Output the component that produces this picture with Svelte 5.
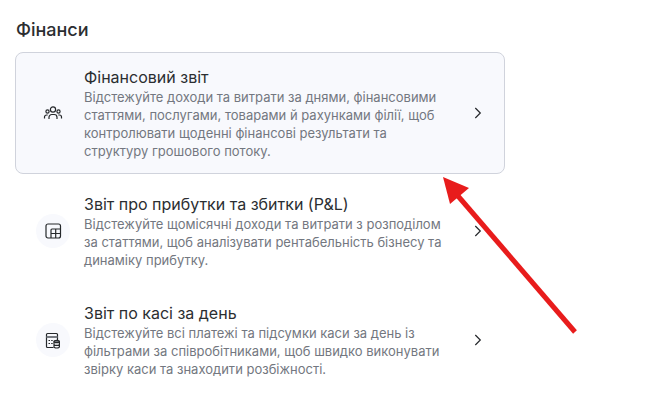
<script lang="ts">
	type Report = {
		icon: 'people' | 'layout' | 'register';
		title: string;
		text: string;
		active?: boolean;
	};

	const reports: Report[] = [
		{
			icon: 'people',
			title: 'Фінансовий звіт',
			text: 'Відстежуйте доходи та витрати за днями, фінансовими статтями, послугами, товарами й рахунками філії, щоб контролювати щоденні фінансові результати та структуру грошового потоку.',
			active: true
		},
		{
			icon: 'layout',
			title: 'Звіт про прибутки та збитки (P&L)',
			text: 'Відстежуйте щомісячні доходи та витрати з розподілом за статтями, щоб аналізувати рентабельність бізнесу та динаміку прибутку.'
		},
		{
			icon: 'register',
			title: 'Звіт по касі за день',
			text: 'Відстежуйте всі платежі та підсумки каси за день із фільтрами за співробітниками, щоб швидко виконувати звірку каси та знаходити розбіжності.'
		}
	];
</script>

<main>
	<h2>Фінанси</h2>

	<div class="list">
		{#each reports as report}
			<a href="#{report.icon}" class="card" class:active={report.active}>
				<span class="icon">
					{#if report.icon === 'people'}
						<svg width="20" height="20" viewBox="0 0 20 20">
							<circle cx="10" cy="6.5" r="2.6" />
							<circle cx="4.5" cy="8.500" r="1.6" />
							<circle cx="15.5" cy="8.500" r="1.6" />
							<path d="M6 16v-1.700a2.800 2.800 0 0 1 2.800-2.800h2.400a2.800 2.800 0 0 1 2.800 2.800V16" />
							<path d="M1.500 15.500V14a2 2 0 0 1 2-2h1.200M18.500 15.500V14a2 2 0 0 0-2-2h-1.200" />
						</svg>
					{:else if report.icon === 'layout'}
						<svg width="20" height="20" viewBox="0 0 20 20">
							<rect x="3" y="3" width="14.5" height="14" rx="2" />
							<path d="M8 17V9a1 1 0 0 1 1-1h8.500M8 12.500h9.500M12.700 8v9" />
						</svg>
					{:else}
						<svg width="20" height="20" viewBox="0 0 20 20">
							<path d="M10.500 17.500H4.500a1 1 0 0 1-1-1v-12a1 1 0 0 1 1-1h9a1 1 0 0 1 1 1V10" />
							<path class="band" d="M3.500 7h11" />
							<path d="M5.500 10.500h1.500M8.200 10.500h1.500M5.500 13.500h1.500M8.200 13.500h1.500" />
							<ellipse class="coin" cx="13.700" cy="11.500" rx="2.700" ry="1.200" />
							<path d="M11 11.500v5.300c0 .7 1.200 1.200 2.700 1.200s2.700-.5 2.700-1.200v-5.300M11 14.200c0 .7 1.200 1.200 2.700 1.200s2.700-.5 2.700-1.200" />
						</svg>
					{/if}
				</span>
				<span class="body">
					<span class="title">{report.title}</span>
					<span class="text">{report.text}</span>
				</span>
				<svg class="chevron" width="12" height="12" viewBox="0 0 12 12">
					<path d="M3.300 1 8.300 6l-5 5" />
				</svg>
			</a>
		{/each}

		<svg class="pointer" width="136" height="158" viewBox="0 0 136 158">
			<path class="shaft" d="M15 19 132 155" />
			<path class="head" d="M0 0 26 11 7 27z" />
		</svg>
	</div>
</main>

<style>
	:global(body) {
		margin: 0;
		background: #fff;
	}

	main {
		padding: 18px 15px;
		font-family: Inter, 'Liberation Sans', sans-serif;
		color: #2b2e31;
	}

	h2 {
		margin: 0 0 10px 1px;
		font-size: 18px;
		line-height: 24px;
		font-weight: 500;
	}

	.list {
		position: relative;
		display: flex;
		flex-direction: column;
		gap: 5px;
		max-width: 490px;
	}

	.card {
		display: flex;
		align-items: center;
		gap: 14px;
		padding: 13px 20px;
		border: 1px solid transparent;
		border-radius: 8px;
		color: inherit;
		text-decoration: none;
	}

	.active {
		background: #f8f9fd;
		border-color: #d0d3dc;
	}

	.icon {
		display: flex;
		align-items: center;
		justify-content: center;
		flex: none;
		width: 34px;
		height: 34px;
		border-radius: 50%;
		background: #f8f9fd;
	}

	svg {
		flex: none;
		fill: none;
		stroke: #25282b;
		stroke-width: 1.2;
	}

	.band {
		stroke: #777b82;
		stroke-width: 2;
	}

	.coin {
		fill: #777b82;
	}

	.body {
		flex: 1;
		min-width: 0;
		padding-right: 8px;
	}

	.title,
	.text {
		display: block;
	}

	.title {
		font-size: 16px;
		line-height: 22px;
	}

	.text {
		font-size: 13px;
		line-height: 18px;
		color: #737780;
	}

	.pointer {
		position: absolute;
		top: 125px;
		left: 428px;
		pointer-events: none;
	}

	.shaft {
		stroke: #e81c1c;
		stroke-width: 5;
	}

	.head {
		fill: #e81c1c;
		stroke: none;
	}
</style>
